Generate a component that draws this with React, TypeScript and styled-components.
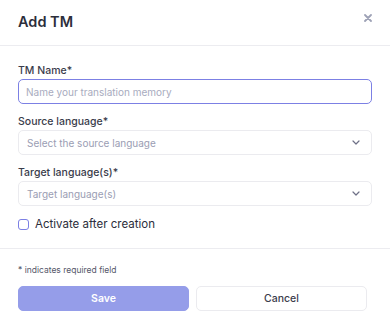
import React from "react";
import styled, { createGlobalStyle } from "styled-components";

const GlobalStyle = createGlobalStyle`
  html, body {
    margin: 0;
    padding: 0;
    background: #ffffff;
  }
  body {
    font-family: Inter, "Noto Sans", sans-serif;
    color: #2b2d3a;
  }
`;

const Dialog = styled.div`
  width: 390px;
  height: 321px;
  background: #fff;
  display: flex;
  flex-direction: column;
`;

const Header = styled.div`
  height: 46px;
  padding: 0 18px;
  box-sizing: border-box;
  display: flex;
  align-items: center;
  justify-content: space-between;
  border-bottom: 1px solid #ececf0;
`;

const Title = styled.h2`
  margin: 0;
  font-size: 14.5px;
  font-weight: 600;
  color: #2c2e3b;
  margin-top: -3px;
`;

const CloseButton = styled.button`
  border: none;
  background: none;
  padding: 0;
  margin-top: -10px;
  margin-right: -1px;
  width: 10px;
  height: 10px;
  display: flex;
  align-items: center;
  justify-content: center;
  cursor: pointer;
`;

const Body = styled.div`
  padding: 15px 18px 0;
  display: flex;
  flex-direction: column;
  height: 203px;
  box-sizing: border-box;
  border-bottom: 1px solid #ececf0;
`;

const Field = styled.div`
  display: flex;
  flex-direction: column;
  gap: 2px;
  margin-bottom: 8px;
`;

const Label = styled.label`
  font-size: 10.5px;
  font-weight: 500;
  color: #3a3c4b;
  height: 16px;
  line-height: 19px;
`;

const Input = styled.input`
  height: 25px;
  box-sizing: border-box;
  border: 1.5px solid #7c80e4;
  border-radius: 5px;
  padding: 0 7px;
  font-family: inherit;
  font-size: 10px;
  color: #2b2d3a;
  outline: none;
  &::placeholder {
    color: #a8abbe;
  }
`;

const Select = styled.div`
  height: 25px;
  box-sizing: border-box;
  border: 1px solid #ebebef;
  border-radius: 5px;
  padding: 0 11px 0 8px;
  display: flex;
  align-items: center;
  justify-content: space-between;
  font-size: 10px;
  color: #9a9db3;
`;

const CheckRow = styled.label`
  display: flex;
  align-items: center;
  gap: 6px;
  height: 12px;
  margin-top: 4px;
  font-size: 11.5px;
  color: #2c2e3b;
`;

const CheckBox = styled.span`
  width: 11px;
  height: 11px;
  border: 1.5px solid #7c80e4;
  border-radius: 3px;
  box-sizing: border-box;
`;

const Footer = styled.div`
  padding: 14px 18px 0;
  display: flex;
  flex-direction: column;
`;

const Note = styled.p`
  margin: 0 0 9px;
  font-size: 8.5px;
  color: #55576a;
  height: 14px;
  line-height: 14px;
`;

const Actions = styled.div`
  display: grid;
  grid-template-columns: 171px 171px;
  gap: 7px;
`;

const Button = styled.button<{ $primary?: boolean }>`
  height: 25px;
  border-radius: 5px;
  font-family: inherit;
  font-size: 10.5px;
  font-weight: ${({ $primary }) => ($primary ? 600 : 500)};
  color: ${({ $primary }) => ($primary ? "#ffffff" : "#3a3c4b")};
  background: ${({ $primary }) => ($primary ? "#959de9" : "#ffffff")};
  border: 1px solid ${({ $primary }) => ($primary ? "#959de9" : "#ebebef")};
  cursor: pointer;
`;

const Chevron = () => (
  <svg width="8" height="5" viewBox="0 0 8 5" fill="none">
    <path d="M1 1l3 3 3-3" stroke="#6e7086" strokeWidth="1.2" strokeLinecap="round" strokeLinejoin="round" />
  </svg>
);

export default function App() {
  return (
    <>
      <GlobalStyle />
      <Dialog>
        <Header>
          <Title>Add TM</Title>
          <CloseButton aria-label="Close">
            <svg width="8" height="8" viewBox="0 0 8 8">
              <path d="M1 1l6 6M7 1l-6 6" stroke="#9ea2b6" strokeWidth="1.8" strokeLinecap="round" />
            </svg>
          </CloseButton>
        </Header>
        <Body>
          <Field>
            <Label>TM Name*</Label>
            <Input placeholder="Name your translation memory" />
          </Field>
          <Field>
            <Label>Source language*</Label>
            <Select>
              Select the source language
              <Chevron />
            </Select>
          </Field>
          <Field>
            <Label>Target language(s)*</Label>
            <Select>
              Target language(s)
              <Chevron />
            </Select>
          </Field>
          <CheckRow>
            <CheckBox />
            Activate after creation
          </CheckRow>
        </Body>
        <Footer>
          <Note>* indicates required field</Note>
          <Actions>
            <Button $primary>Save</Button>
            <Button>Cancel</Button>
          </Actions>
        </Footer>
      </Dialog>
    </>
  );
}
